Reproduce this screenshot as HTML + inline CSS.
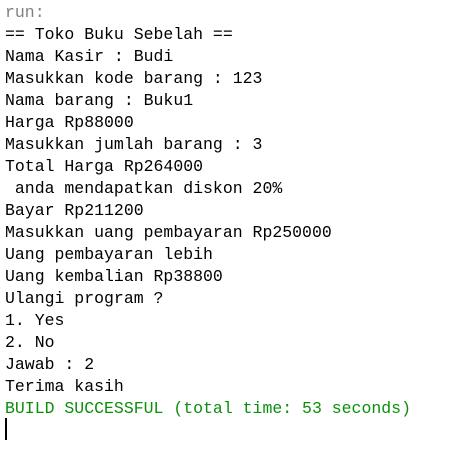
<!DOCTYPE html>
<html><head><style>
html,body{margin:0;padding:0;background:#fff;width:464px;height:472px;overflow:hidden}
pre{margin:0;position:absolute;left:5px;top:2px;font-family:"Liberation Mono",monospace;font-size:16.5px;line-height:22px;color:#000}
.g{color:#808080}.s{color:#0b8f0b}
.c{position:absolute;left:5px;top:418px;width:2px;height:22px;background:#000}
</style></head><body>
<pre><span class="g">run:</span>
== Toko Buku Sebelah ==
Nama Kasir : Budi
Masukkan kode barang : 123
Nama barang : Buku1
Harga Rp88000
Masukkan jumlah barang : 3
Total Harga Rp264000
 anda mendapatkan diskon 20%
Bayar Rp211200
Masukkan uang pembayaran Rp250000
Uang pembayaran lebih
Uang kembalian Rp38800
Ulangi program ?
1. Yes
2. No
Jawab : 2
Terima kasih
<span class="s">BUILD SUCCESSFUL (total time: 53 seconds)</span></pre>
<div class="c"></div>
</body></html>
